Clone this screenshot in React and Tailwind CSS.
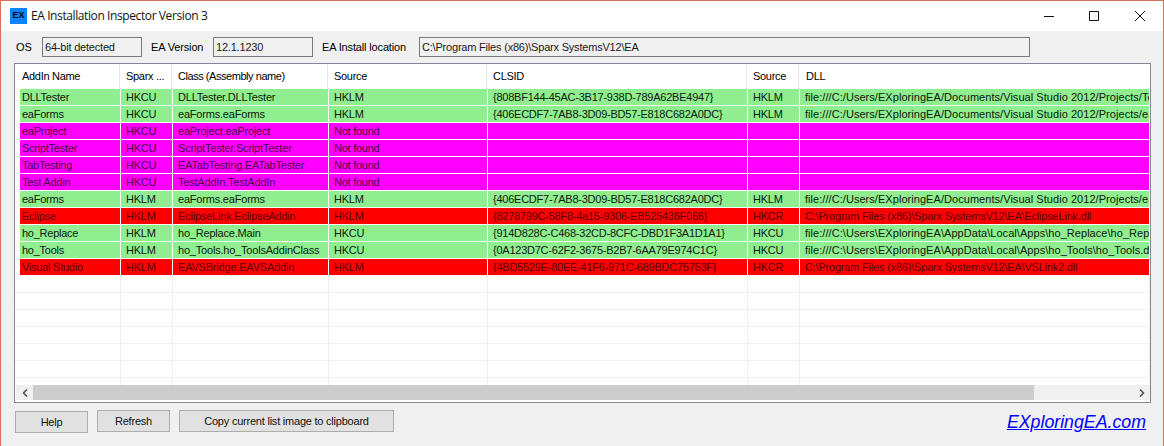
import { ChevronLeft, ChevronRight } from 'lucide-react'

const columns = ['AddIn Name', 'Sparx ...', 'Class (Assembly name)', 'Source', 'CLSID', 'Source', 'DLL']

const gridCols = 'grid grid-cols-[106px_52px_156px_159px_260px_52px_350px]'

const cellTracking = [
  'tracking-[-0.25px]',
  'tracking-[-0.25px]',
  'tracking-[-0.2px]',
  'tracking-[-0.25px]',
  'tracking-[-0.24px]',
  'tracking-[-0.25px]',
  'tracking-[0.05px]',
]

const docsPath = 'file:///C:/Users/EXploringEA/Documents/Visual Studio 2012/Projects/'
const appsPath = 'file:///C:\\Users\\EXploringEA\\AppData\\Local\\Apps\\'
const sparxPath = 'C:\\Program Files (x86)\\Sparx SystemsV12\\EA\\'

const rows = [
  { tone: 'green', cells: ['DLLTester', 'HKCU', 'DLLTester.DLLTester', 'HKLM', '{808BF144-45AC-3B17-938D-789A62BE4947}', 'HKLM', docsPath + 'TestAddins/DLLTester.dll'] },
  { tone: 'green', cells: ['eaForms', 'HKCU', 'eaForms.eaForms', 'HKLM', '{406ECDF7-7AB8-3D09-BD57-E818C682A0DC}', 'HKLM', docsPath + 'eaForms/eaForms.dll'] },
  { tone: 'magenta', cells: ['eaProject', 'HKCU', 'eaProject.eaProject', 'Not found', '', '', ''] },
  { tone: 'magenta', cells: ['ScriptTester', 'HKCU', 'ScriptTester.ScriptTester', 'Not found', '', '', ''] },
  { tone: 'magenta', cells: ['TabTesting', 'HKCU', 'EATabTesting.EATabTester', 'Not found', '', '', ''] },
  { tone: 'magenta', cells: ['Test Addin', 'HKCU', 'TestAddIn.TestAddIn', 'Not found', '', '', ''] },
  { tone: 'green', cells: ['eaForms', 'HKLM', 'eaForms.eaForms', 'HKLM', '{406ECDF7-7AB8-3D09-BD57-E818C682A0DC}', 'HKLM', docsPath + 'eaForms/eaForms.dll'] },
  { tone: 'red', cells: ['Eclipse', 'HKLM', 'EclipseLink.EclipseAddin', 'HKLM', '{8278799C-58F8-4a15-9306-EB525436F066}', 'HKCR', sparxPath + 'EclipseLink.dll'] },
  { tone: 'green', cells: ['ho_Replace', 'HKLM', 'ho_Replace.Main', 'HKCU', '{914D828C-C468-32CD-8CFC-DBD1F3A1D1A1}', 'HKCU', appsPath + 'ho_Replace\\ho_Replace.dll'] },
  { tone: 'green', cells: ['ho_Tools', 'HKLM', 'ho_Tools.ho_ToolsAddinClass', 'HKCU', '{0A123D7C-62F2-3675-B2B7-6AA79E974C1C}', 'HKCU', appsPath + 'ho_Tools\\ho_Tools.dll'] },
  { tone: 'red', cells: ['Visual Studio', 'HKLM', 'EAVSBridge.EAVSAddin', 'HKLM', '{4BD5529E-80EE-41F6-971C-689BDC75753F}', 'HKCR', sparxPath + 'VSLink2.dll'] },
]

const toneCls = {
  green: 'bg-[#90ee90] text-[#0a1a0a]',
  magenta: 'bg-[#ff00ff] text-[#4a004a]',
  red: 'bg-[#ff0000] text-[#5a0000]',
}

function Field({ className, children }) {
  return (
    <div className={`h-5 border border-[#7a7a7a] bg-[#f0f0f0] pl-[2px] leading-[18px] tracking-[-0.2px] text-[#1a1a1a] ${className}`}>
      {children}
    </div>
  )
}

function Button({ className, children }) {
  return (
    <button className={`h-[22px] border border-[#adadad] bg-[#e1e1e1] leading-[18px] tracking-[-0.22px] text-[#111] ${className}`}>
      {children}
    </button>
  )
}

function DataRow({ tone, cells, last }) {
  return (
    <div className={`${gridCols} h-[17px] bg-white`}>
      {cells.map((cell, i) => (
        <div
          key={i}
          className={`h-[17px] overflow-hidden whitespace-nowrap border-b border-r leading-[17px] ${
            last ? 'border-b-[#f0f0f0]' : 'border-b-white'
          } border-r-white ${i === 0 ? 'ml-[5px] pl-[2px]' : 'pl-[5px]'} ${
            i === 6 && tone === 'red' ? 'tracking-[-0.2px]' : cellTracking[i]
          } ${toneCls[tone]}`}
        >
          {cell}
        </div>
      ))}
    </div>
  )
}

function EmptyRow() {
  return (
    <div className={`${gridCols} h-[17px]`}>
      {columns.map((col, i) => (
        <div key={i} className="h-[17px] border-b border-r border-[#f0f0f0]" />
      ))}
    </div>
  )
}

export default function App() {
  return (
    <div className="h-[446px] w-[1164px] overflow-hidden border-x border-t border-[#d9705a] bg-[#f0f0f0] font-['Liberation_Sans',sans-serif] text-[11px] text-black">
      <div className="flex h-[30px] items-center bg-white">
        <div className="ml-[9px] flex h-[16px] w-[17px] items-center justify-center bg-[#0a84ff] text-[9px] font-bold text-black">
          EX
        </div>
        <span className="ml-[4px] font-['Open_Sans',sans-serif] text-[12px] tracking-[-0.4px] text-[#111]">EA Installation Inspector Version 3</span>
        <div className="ml-auto flex items-center pr-[18px]">
          <svg width="10" height="10" viewBox="0 0 10 10" className="mr-[35px]" fill="none" stroke="#111">
            <path d="M0 5.5h10" />
          </svg>
          <svg width="10" height="10" viewBox="0 0 10 10" className="mr-[36px]" fill="none" stroke="#111">
            <path d="M.5.5h9v9h-9z" />
          </svg>
          <svg width="10" height="10" viewBox="0 0 10 10" fill="none" stroke="#111">
            <path d="M0 0l10 10M10 0L0 10" />
          </svg>
        </div>
      </div>

      <div className="mt-[6px] flex items-center pl-[15px] tracking-[-0.15px]">
        <span className="mt-px w-[26px]">OS</span>
        <Field className="w-[100px]">64-bit detected</Field>
        <span className="ml-[9px] mt-px w-[62px]">EA Version</span>
        <Field className="w-[100px]">12.1.1230</Field>
        <span className="ml-[9px] mt-px w-[97px]">EA Install location</span>
        <Field className="w-[611px]">C:\Program Files (x86)\Sparx SystemsV12\EA</Field>
      </div>

      <div className="ml-[13px] mt-[6px] h-[340px] w-[1137px] overflow-hidden border border-[#828790] bg-white">
        <div className={`${gridCols} h-[25px] tracking-[-0.3px]`}>
          {columns.map((col, i) => (
            <div key={i} className={`overflow-hidden whitespace-nowrap border-r border-[#e5e5e5] leading-[25px] ${i === 0 ? 'mr-px pl-[7px]' : i === 6 ? 'border-r-0 pl-[6px]' : i === 2 ? '-ml-px mr-px pl-[6px] tracking-[-0.45px]' : '-ml-px mr-px pl-[6px]'}`}>
              {col}
            </div>
          ))}
        </div>
        <div className="h-[296px] overflow-hidden">
          {rows.map((row, i) => (
            <DataRow key={i} tone={row.tone} cells={row.cells} last={i === rows.length - 1} />
          ))}
          {Array.from({ length: 7 }).map((_, i) => (
            <EmptyRow key={i} />
          ))}
        </div>
        <div className="ml-px flex h-[15px] bg-[#f0f0f0]">
          <div className="flex w-[17px] items-center justify-center text-[#555]">
            <ChevronLeft size={12} strokeWidth={3.5} />
          </div>
          <div className="w-[1001px] bg-[#cdcdcd]" />
          <div className="ml-auto flex w-[17px] items-center justify-center text-[#555]">
            <ChevronRight size={12} strokeWidth={3.5} />
          </div>
        </div>
      </div>

      <div className="ml-[14px] mt-[7px] flex items-start">
        <Button className="mt-px w-[73px]">Help</Button>
        <Button className="ml-[9px] w-[73px]">Refresh</Button>
        <Button className="ml-[9px] w-[215px]">Copy current list image to clipboard</Button>
        <a className="ml-auto mr-[17px] mt-[2px] text-[17.75px] italic leading-[20px] text-[#0000ff] underline">
          EXploringEA.com
        </a>
      </div>
    </div>
  )
}
